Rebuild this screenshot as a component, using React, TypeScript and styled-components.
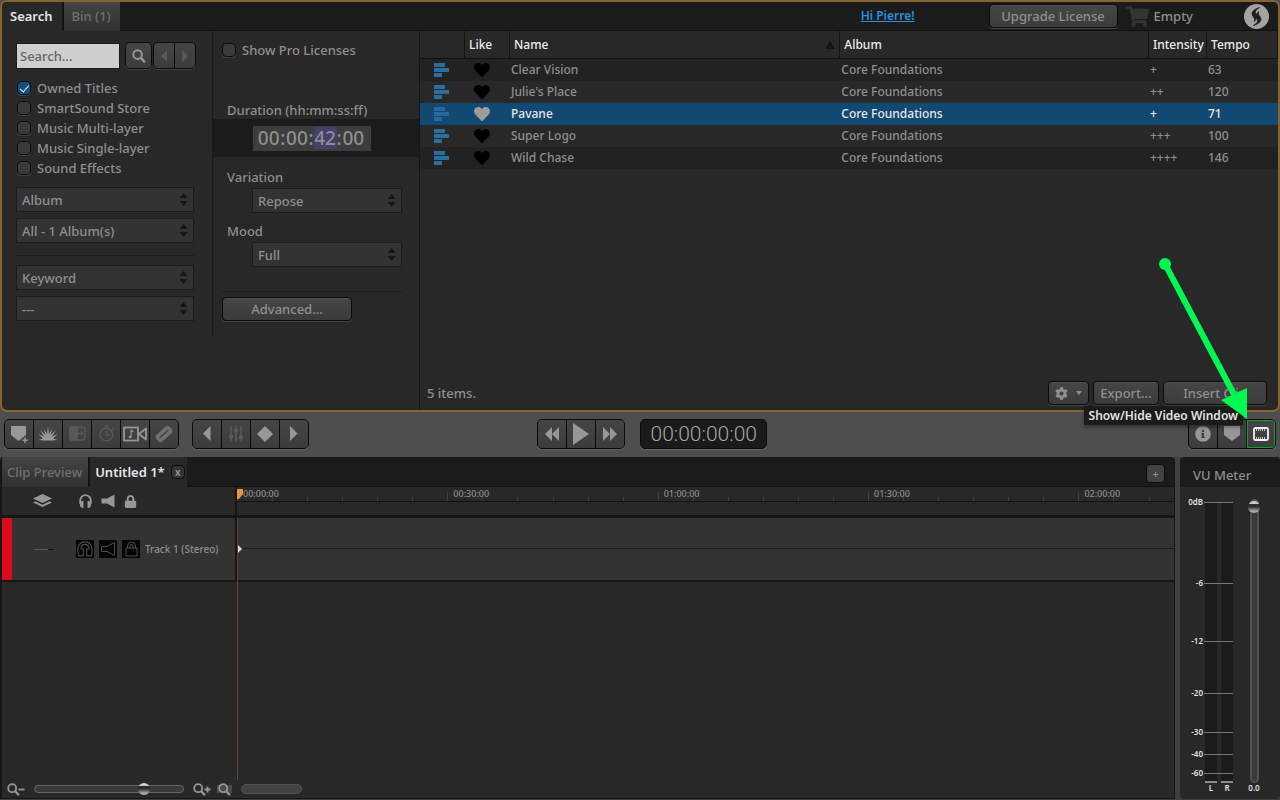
import React from "react";
import styled, { createGlobalStyle, css } from "styled-components";
import { FaCog, FaHeart, FaInfoCircle, FaLock, FaShoppingCart } from "react-icons/fa";

const GlobalStyle = createGlobalStyle`
  *, *::before, *::after { box-sizing: border-box; }
  body {
    margin: 0;
    background: #4e4e4e;
    color: #8f8f8f;
    font: 500 13px/20px "Noto Sans", sans-serif;
  }
  button, input, select { font: inherit; color: inherit; margin: 0; }
  svg { display: block; flex: none; }
`;

const Page = styled.div`
  display: flex;
  flex-direction: column;
  min-height: 100vh;
`;

/* ---------- browser panel ---------- */

const BrowserPanel = styled.section`
  display: flex;
  flex-direction: column;
  min-height: 412px;
  border: 2px solid #86642f;
  border-radius: 7px;
  background: #282828;
  overflow: hidden;
`;

const TopBar = styled.header`
  display: flex;
  align-items: center;
  height: 29px;
  background: #1b1b1b;
  border-bottom: 1px solid #101010;
`;

const Tab = styled.button<{ $active?: boolean; $divided?: boolean }>`
  display: flex;
  align-items: center;
  gap: 6px;
  height: 100%;
  padding: 0 8px;
  border: 0;
  border-right: ${(p) => (p.$divided ? "2px solid #141414" : "0")};
  background: ${(p) => (p.$active ? "#282828" : "linear-gradient(#444, #303030)")};
  color: ${(p) => (p.$active ? "#e4e4e4" : "#707070")};
  font-weight: ${(p) => (p.$active ? 600 : 500)};
  white-space: nowrap;
`;

const BrowserTab = styled(Tab)`
  height: 29px;
  padding: 0 9px 0 8px;
`;

const Account = styled.div`
  display: flex;
  align-items: center;
  margin-left: auto;
  padding-right: 9px;
`;

const AccountLink = styled.a`
  margin-right: 74px;
  color: #2f8fd6;
  font-size: 12px;
  font-weight: 600;
`;

const Cart = styled.div`
  display: flex;
  align-items: center;
  gap: 5px;
  margin: 0 51px 0 8px;
  svg { color: #343434; }
`;

const Button = styled.button<{ $width: number }>`
  display: flex;
  align-items: center;
  justify-content: center;
  gap: 8px;
  width: ${(p) => p.$width}px;
  height: 24px;
  padding: 0;
  border: 1px solid #0a0a0a;
  border-radius: 4px;
  background: linear-gradient(#464646, #3b3b3b);
  box-shadow: inset 0 1px #505050, 0 1px #454545;
  color: #8f8f8f;
`;

const BrowserBody = styled.div`
  display: flex;
  flex: 1;
`;

const FilterColumn = styled.aside`
  align-self: flex-start;
  width: 211px;
  height: 305px;
  padding: 11px 18px 0 14px;
  border-right: 1px solid #1a1a1a;
`;

const SearchRow = styled.form`
  display: flex;
  align-items: center;
  margin-bottom: 9px;
`;

const SearchInput = styled.input`
  width: 104px;
  height: 26px;
  padding: 0 3px;
  border: 1px solid #1a1a1a;
  border-radius: 0;
  background: #cecece;
  color: #333;
  outline: 0;
  &::placeholder { color: #666; opacity: 1; }
`;

const IconGroup = styled.div`
  display: flex;
  flex: none;
  border: 1px solid #0a0a0a;
  border-radius: 5px;
  background: #0a0a0a;
  box-shadow: 0 1px #626262;
  gap: 1px;
  overflow: hidden;
`;

const SearchGroup = styled(IconGroup)`
  margin-left: 5px;
  box-shadow: 0 1px #444;
  & + & { margin-left: 1px; }
`;

const IconButton = styled.button<{ $dim?: boolean; $small?: boolean; $marked?: boolean }>`
  display: flex;
  align-items: center;
  justify-content: center;
  width: ${(p) => (p.$small ? 20 : 28)}px;
  height: ${(p) => (p.$small ? 25 : 28)}px;
  padding: 0;
  border: 0;
  background: linear-gradient(#454545, #3c3c3c);
  color: ${(p) => (p.$marked ? "#f0f0f0" : p.$dim ? "#585858" : "#979797")};
  ${(p) => p.$marked && css`outline: 1px solid #00a832; outline-offset: -1px;`}
`;

const SearchButton = styled(IconButton)`
  width: 25px;
`;

const CheckLabel = styled.label`
  display: flex;
  align-items: center;
  gap: 6px;
  height: 20px;
`;

const SourceLabel = styled(CheckLabel)`
  padding-left: 1px;
`;

const CheckBox = styled.input.attrs({ type: "checkbox" })`
  appearance: none;
  display: grid;
  place-items: center;
  width: 14px;
  height: 14px;
  border: 1px solid #0c0c0c;
  border-radius: 4px;
  background: #3a3a3a;
  box-shadow: 0 1px #424242;
  &:checked { background: #12507e; }
  &:checked::after {
    content: "";
    width: 9px;
    height: 5px;
    border: solid #e8e8e8;
    border-width: 0 0 1px 1px;
    transform: translateY(-1px) rotate(-48deg);
  }
`;

const SelectStack = styled.div`
  display: flex;
  flex-direction: column;
  gap: 6px;
  padding-top: 9px;
`;

const SelectBox = styled.div`
  display: grid;
  align-items: center;
  & > * { grid-area: 1 / 1; }
  & > svg { justify-self: end; margin-right: 6px; pointer-events: none; }
`;

const SelectField = styled.select`
  appearance: none;
  width: 100%;
  height: 25px;
  padding: 0 20px 0 5px;
  border: 1px solid #1b1b1b;
  border-radius: 0;
  background: #333;
`;

const Rule = styled.hr`
  width: 100%;
  margin: 6px 0 3px;
  border: 0;
  border-top: 1px solid #1b1b1b;
`;

const SettingsColumn = styled.div`
  width: 207px;
  padding-top: 9px;
  border-right: 1px solid #161616;
`;

const SettingsInset = styled.div`
  padding: 0 17px 0 9px;
`;

const FieldTitle = styled.div`
  padding-left: 14px;
  line-height: 18px;
`;

const ProLabel = styled(CheckLabel)`
  margin: 0 9px 41px;
`;

const TimeBand = styled.div`
  display: flex;
  align-items: center;
  justify-content: center;
  height: 38px;
  margin-bottom: 11px;
  padding-right: 8px;
  background: #1b1b1b;
`;

const TimeField = styled.div`
  display: flex;
  align-items: center;
  height: 25px;
  padding: 0 6px 0 4px;
  background: #3d3d3d;
  font-size: 19px;
`;

const TimePart = styled.input<{ $active?: boolean }>`
  width: 23px;
  height: 22px;
  padding: 0;
  border: 0;
  outline: 0;
  text-align: center;
  background: ${(p) => (p.$active ? "#41416a" : "transparent")};
`;

const Setting = styled.label`
  display: block;
  margin-bottom: 9px;
`;

const SettingSelect = styled.div`
  padding: 2px 17px 0 39px;
`;

const SettingsRule = styled(Rule)`
  margin: 24px 0 5px;
`;

const Results = styled.div`
  display: flex;
  flex: 1;
  flex-direction: column;
  min-width: 0;
`;

const ResultTable = styled.table`
  width: 100%;
  table-layout: fixed;
  border-collapse: separate;
  border-spacing: 0;
`;

const HeadCell = styled.th<{ $width?: string }>`
  width: ${(p) => p.$width ?? "auto"};
  height: 28px;
  padding: 0 4px;
  border-right: 1px solid #151515;
  border-bottom: 1px solid #101010;
  color: #ececec;
  font-size: 12px;
  font-weight: 500;
  text-align: left;
  white-space: nowrap;
`;

const SortHead = styled.div`
  display: flex;
  align-items: center;
  justify-content: space-between;
`;

const Row = styled.tr<{ $selected?: boolean }>`
  height: 22px;
  background: #282828;
  &:nth-child(odd) { background: #222; }
  ${(p) => p.$selected && css`&&:nth-child(n) { background: #114972; color: #e6e6e6; }`}
`;

const Cell = styled.td`
  height: 22px;
  padding: 0 1px;
  font-size: 12px;
`;

const IconCell = styled(Cell)<{ $trim: number }>`
  padding: 0 ${(p) => p.$trim}px 0 0;
  svg { margin: 0 auto; }
`;

const ResultFooter = styled.footer`
  display: flex;
  align-items: center;
  gap: 4px;
  margin-top: auto;
  padding: 0 11px 5px 7px;
`;

const ItemCount = styled.span`
  margin-right: auto;
`;

/* ---------- transport bar ---------- */

const Transport = styled.div`
  display: grid;
  grid-template-columns: calc(42% - 1px) auto 1fr;
  align-items: center;
  height: 45px;
  padding: 0 4px 2px;
`;

const ToolSet = styled.div<{ $gap: number }>`
  display: flex;
  gap: ${(p) => p.$gap}px;
`;

const TimeDisplay = styled.output`
  width: 127px;
  height: 30px;
  border: 1px solid #0a0a0a;
  border-radius: 5px;
  background: #1a1a1a;
  box-shadow: 0 1px #6a6a6a;
  color: #a6a6a6;
  font: 300 21px/28px Roboto, sans-serif;
  text-align: center;
`;

const ViewTools = styled.div`
  position: relative;
  justify-self: end;
`;

const Tooltip = styled.div`
  position: absolute;
  right: 33px;
  top: -13px;
  padding: 0 5px;
  background: #1b1b1b;
  box-shadow: 0 2px 4px rgba(0, 0, 0, 0.4);
  color: #e2e2e2;
  font-size: 12px;
  font-weight: 600;
  line-height: 19px;
  white-space: nowrap;
`;

const Pointer = styled.svg`
  position: absolute;
  right: 26px;
  bottom: 28px;
  pointer-events: none;
`;

/* ---------- timeline ---------- */

const Workspace = styled.main`
  display: flex;
  flex: 1;
  gap: 5px;
  padding-bottom: 1px;
  background: #404040;
`;

const TimelinePanel = styled.section`
  display: flex;
  flex: 1;
  flex-direction: column;
  min-width: 0;
  border: solid #161616;
  border-width: 0 1px 1px 2px;
  border-radius: 4px 4px 0 0;
  background: #282828;
  overflow: hidden;
`;

const TimelineTabs = styled.div`
  display: flex;
  align-items: center;
  height: 30px;
  padding-right: 9px;
  background: #1b1b1b;
  border-bottom: 1px solid #101010;
`;

const TimelineTab = styled(Tab)`
  height: 30px;
  padding: 0 ${(p) => (p.$divided ? 6 : 2)}px 0 5px;
`;

const CloseButton = styled.button`
  display: flex;
  align-items: center;
  justify-content: center;
  width: 14px;
  height: 14px;
  padding: 0;
  border: 1px solid #0c0c0c;
  border-radius: 4px;
  background: #333;
  color: #999;
  font-size: 10px;
  line-height: 10px;
`;

const AddButton = styled(CloseButton)`
  width: 19px;
  height: 19px;
  margin: 4px 0 0 auto;
  background: #424242;
`;

const TimelineHead = styled.div`
  display: grid;
  grid-template-columns: 235px 1fr;
  height: 31px;
  border-bottom: 3px solid #161616;
`;

const HeadTools = styled.div`
  display: flex;
  align-items: center;
  padding-left: 31px;
  gap: 9px;
  border-right: 2px solid #161616;
  color: #979797;
  & > :first-child { margin-right: 18px; }
`;

const Ruler = styled.div`
  display: flex;
  height: 15px;
  border-bottom: 1px solid #131313;
  overflow: hidden;
`;

const RulerSegment = styled.div`
  display: grid;
  flex: 0 0 22.45%;
  & > * { grid-area: 1 / 1; }
`;

const RulerLabel = styled.span`
  padding-left: 6px;
  color: #8f8f8f;
  font-size: 9px;
  line-height: 14px;
`;

const Ticks = styled.div`
  display: flex;
  align-items: flex-end;
`;

const Tick = styled.i<{ $major?: boolean }>`
  flex: 1;
  height: ${(p) => (p.$major ? 9 : 4)}px;
  border-left: 1px solid #404040;
`;

const TimelineBody = styled.div`
  position: relative;
  flex: 1;
  min-height: 262px;
`;

const Track = styled.div`
  display: grid;
  grid-template-columns: 235px 1fr;
  height: 64px;
  border-bottom: 2px solid #161616;
  background: #333;
`;

const TrackHead = styled.div`
  display: flex;
  align-items: center;
  gap: 5px;
  border-left: 10px solid #dd0a1c;
  border-right: 2px solid #161616;
  font-size: 10px;
`;

const TrackLevel = styled.span`
  width: 20px;
  height: 1px;
  margin: 0 17px 0 22px;
  background: linear-gradient(90deg, #585858 70%, #161616 70%);
`;

const TrackToggle = styled.button`
  display: flex;
  align-items: center;
  justify-content: center;
  width: 18px;
  height: 18px;
  padding: 0;
  border: 0;
  background: #050505;
  color: #4c4c4c;
`;

const TrackName = styled.span`
  white-space: nowrap;
`;

const TrackLane = styled.div`
  display: flex;
  align-items: center;
  &::after {
    content: "";
    flex: 1;
    height: 2px;
    border-top: 1px solid #1d1d1d;
    background: #2c3840;
  }
`;

const Playhead = styled.div`
  position: absolute;
  left: 235px;
  top: 0;
  bottom: 0;
  width: 1px;
  background: #5d4731;
`;

const PlayheadFlag = styled.svg`
  position: absolute;
  left: 0;
  top: -29px;
`;

const TimelineFooter = styled.div`
  display: flex;
  align-items: center;
  height: 18px;
  padding-left: 5px;
  color: #979797;
`;

const thumb = css`
  appearance: none;
  width: 12px;
  height: 12px;
  border: 0;
  border-radius: 6px;
  background: linear-gradient(#d4d4d4 20%, #222 30%, #333 50%, #aaa 85%);
`;

const ZoomSlider = styled.input.attrs({ type: "range" })`
  appearance: none;
  width: 150px;
  height: 8px;
  margin: 0 9px;
  border: 1px solid #666;
  border-radius: 4px;
  background: #3a3a3a;
  &::-webkit-slider-thumb { ${thumb} }
`;

const ScrollThumb = styled.div`
  width: 61px;
  height: 10px;
  margin-left: 9px;
  border: 1px solid #545454;
  border-radius: 5px;
  background: #424242;
`;

const ZoomFit = styled.span`
  display: flex;
  justify-content: center;
  width: 15px;
  height: 8px;
  margin-left: 6px;
  align-items: center;
  background: #4a4a4a;
`;

/* ---------- VU meter ---------- */

const MeterPanel = styled.aside`
  display: flex;
  flex-direction: column;
  width: 100px;
  border-radius: 4px;
  background: #282828;
  overflow: hidden;
`;

const MeterTitle = styled.h2`
  margin: 0;
  padding: 3px 0 0 13px;
  height: 30px;
  background: #1b1b1b;
  font-size: 13px;
  font-weight: 500;
  line-height: 30px;
`;

const MeterBody = styled.div`
  display: flex;
  flex: 1;
  padding: 15px 0 0 4px;
`;

const MeterColumn = styled.div`
  display: flex;
  flex-direction: column;
  width: 49px;
`;

const MeterGraph = styled.div`
  display: grid;
  flex: 1;
  & > * { grid-area: 1 / 1; }
`;

const Bars = styled.div`
  display: grid;
  grid-template-columns: 12px 12px;
  gap: 4px;
  justify-content: end;
`;

const Bar = styled.div`
  border-bottom: 2px solid #8c8c8c;
  background: #1b1b1b;
`;

const Scale = styled.div`
  display: grid;
  grid-template-rows: 81fr 58fr 52fr 39fr 22fr 19fr 10fr;
`;

const Mark = styled.div`
  display: flex;
  align-items: center;
  height: 10px;
  margin-top: -5px;
  &::after {
    content: "";
    width: 29px;
    height: 1px;
    background: #767676;
  }
`;

const MeterText = styled.span`
  flex: 1;
  padding-right: 1px;
  color: #e0e0e0;
  font-size: 8px;
  font-weight: 600;
  line-height: 10px;
  text-align: right;
`;

const MeterFoot = styled.div`
  display: grid;
  grid-template-columns: 12px 12px;
  gap: 4px;
  justify-content: end;
  height: 16px;
`;

const FootText = styled(MeterText)`
  padding: 0;
  text-align: center;
`;

const FaderColumn = styled.div`
  display: flex;
  flex-direction: column;
  align-items: center;
  width: 24px;
  margin: -3px 0 0 9px;
`;

const Fader = styled.input.attrs({ type: "range" })`
  appearance: none;
  writing-mode: vertical-lr;
  direction: rtl;
  flex: 1;
  width: 9px;
  min-height: 0;
  border: 2px solid #505050;
  border-radius: 5px;
  background: #3a3a3a;
  &::-webkit-slider-thumb { ${thumb} }
`;

const FaderFoot = styled.div`
  display: flex;
  height: 16px;
`;

/* ---------- drawings ---------- */

const Arrow = ({ left, size = 12 }: { left?: boolean; size?: number }) => (
  <svg width={size / 2} height={size} viewBox="0 0 6 12" fill="currentColor">
    <path d={left ? "M6 0v12L0 6z" : "M0 0v12l6-6z"} />
  </svg>
);

const UpDown = () => (
  <svg width="9" height="13" viewBox="0 0 9 13" fill="#151515">
    <path d="M4.5 0 8.5 5h-8zM.5 8h8l-4 5z" />
  </svg>
);

const Magnifier = ({ sign, size = 13 }: { sign?: string; size?: number }) => (
  <svg width={sign ? 18 : size} height={size} viewBox={sign ? "0 0 18 13" : "0 0 13 13"} fill="none" stroke="currentColor" strokeWidth="1.8">
    <circle cx="5.2" cy="5.2" r="4" />
    <path d="m8.2 8.2 3.8 4" strokeWidth="2.2" />
    {sign && <path d={sign === "+" ? "M11.5 6.5h6M14.5 3.5v6" : "M11.5 6.5h6"} />}
  </svg>
);

const Lanes = ({ faded }: { faded?: boolean }) => (
  <svg width="15" height="14" viewBox="0 0 15 14" fill={faded ? "#2c6fa3" : "#2a6f9f"}>
    <path d="M0 0h11v4H0zM0 5h15v4H0zM0 10h8v4H0z" opacity={faded ? 0.85 : 1} />
  </svg>
);

const crescent = "M15.500 3.500C9 5.500 6.500 9 9 12.300c1.300 1.600 2 2.700 1.300 5.200 2.700-2.700 3.200-4.800 1.700-7.500-1.200-2.200-.5-4 3.500-6.500z";

const Brand = () => (
  <svg width="25" height="25" viewBox="0 0 25 25">
    <circle cx="12.500" cy="12.500" r="12.500" fill="#a3a3a3" />
    <g fill="#1f1f1f" stroke="#1f1f1f" strokeWidth="0.8">
      <path d={crescent} />
      <path d={crescent} transform="rotate(180 12.500 12.500)" />
    </g>
  </svg>
);

const MarkerAdd = () => (
  <svg width="19" height="18" viewBox="0 0 19 18" fill="currentColor">
    <path d="M1 1h15v9l-7.500 6L1 10z" />
    <path d="M14.300 12.500h1.400v2h2v1.400h-2v2h-1.400v-2h-2v-1.400h2z" />
  </svg>
);

const Marker = () => (
  <svg width="16" height="15" viewBox="0 0 16 15" fill="currentColor">
    <path d="M0 0h16v9l-8 6-8-6z" />
  </svg>
);

const Burst = () => (
  <svg width="20" height="15" viewBox="0 0 20 15" fill="currentColor">
    <path d="m10 0 1 8 3.500-6-2 7L18 4l-4 6.500 6-2.500-5 4.500 5 1.500-6 .500H6L0 14l5-1.500L0 8l6 2.500L2 4l5.500 5-2-7L9 8z" />
  </svg>
);

const SplitBox = () => (
  <svg width="17" height="15" viewBox="0 0 17 15">
    <path d="M9 1h4.500A2.500 2.500 0 0 1 16 3.500v8a2.500 2.500 0 0 1-2.500 2.500H9M9 7.500h7M12.500 5v5" fill="none" stroke="currentColor" strokeWidth="1.400" />
    <path d="M4 0h5v15H4a3 3 0 0 1-4-3V3a3 3 0 0 1 4-3z" fill="currentColor" />
  </svg>
);

const Stopwatch = () => (
  <svg width="17" height="17" viewBox="0 0 17 17" fill="none" stroke="currentColor" strokeWidth="1.600">
    <circle cx="8.500" cy="9.500" r="6.300" />
    <path d="M8.500 6v4h3.500M6.500 1h4M8.500 1v2M14 3l1.500 1.500" />
  </svg>
);

const MusicVideo = () => (
  <svg width="25" height="16" viewBox="0 0 25 16" fill="none" stroke="currentColor" strokeWidth="1.800">
    <rect x="1" y="1.500" width="14" height="13" />
    <path d="M16 8l7-5.500v11z" strokeLinejoin="round" />
    <path d="M8 4v7M8 4l2.500 2" strokeWidth="1.200" />
    <circle cx="7" cy="11" r="1.300" fill="currentColor" stroke="none" />
  </svg>
);

const Clip = () => (
  <svg width="18" height="18" viewBox="0 0 18 18">
    <g transform="rotate(-42 9 9)">
      <rect x="0" y="4.500" width="18" height="9" rx="3" fill="#707070" />
      <path d="M3 9h12" stroke="#404040" strokeWidth="1.500" />
    </g>
  </svg>
);

const Mixer = () => (
  <svg width="14" height="16" viewBox="0 0 14 16" fill="none" stroke="currentColor" strokeWidth="1.600">
    <path d="M2 0v16M7 0v16M12 0v16" />
    <path d="M0 10.500h4M5 4.500h4M10 11.500h4" strokeWidth="3" />
  </svg>
);

const Diamond = () => (
  <svg width="16" height="16" viewBox="0 0 16 16" fill="currentColor">
    <path d="m8 0 8 8-8 8-8-8z" />
  </svg>
);

const Skip = ({ back }: { back?: boolean }) => (
  <svg width="14" height="14" viewBox="0 0 14 14" fill="currentColor">
    <path d={back ? "M7 0v14L0 7zM14 0v14L7 7z" : "M0 0v14l7-7zM7 0v14l7-7z"} />
  </svg>
);

const Play = () => (
  <svg width="16" height="22" viewBox="0 0 16 22" fill="currentColor">
    <path d="M0 0v22l16-11z" />
  </svg>
);

const Film = () => (
  <svg width="16" height="14" viewBox="0 0 16 14" fill="none" stroke="currentColor">
    <rect x="1" y="1" width="14" height="12" rx="1.500" strokeWidth="1.800" />
    <path d="M3 3h10M3 11h10" strokeDasharray="1 1" strokeWidth="1.600" />
  </svg>
);

const Layers = () => (
  <svg width="19" height="14" viewBox="0 0 19 14" fill="currentColor">
    <path d="m9.500 0 9.500 4.500L9.500 9 0 4.500z" />
    <path d="m0 8.500 2.500-1.200 7 3.400 7-3.400L19 8.500 9.500 13z" />
  </svg>
);

const Headphones = ({ outline }: { outline?: boolean }) => (
  <svg width={outline ? 16 : 13} height={outline ? 16 : 14} viewBox="0 0 13 14" fill="none" stroke="currentColor">
    {outline ? (
      <path d="M1 13C-1 6 1 .8 6.500.8S14 6 12 13H8V7h2C10 4 9 3 6.500 3S3 4 3 7h2v6z" />
    ) : (
      <>
        <path d="M1.200 10V6.500a5.300 5.300 0 0 1 10.600 0V10" strokeWidth="1.800" />
        <path d="M1 7h3.500v7H3L1 12zM12 7H8.500v7H10l2-2z" fill="currentColor" stroke="none" />
      </>
    )}
  </svg>
);

const Speaker = ({ outline }: { outline?: boolean }) => (
  <svg width="14" height="14" viewBox="0 0 14 14" fill={outline ? "none" : "currentColor"} stroke={outline ? "currentColor" : "none"}>
    <path d="M.5 4.500H6L13.500.5v13L6 9.500H.5z" />
  </svg>
);

const PadlockOutline = () => (
  <svg width="13" height="16" viewBox="0 0 13 16" fill="none" stroke="currentColor">
    <path d="M1 7h11v8H1zM2.500 7V5a4 4 0 0 1 8 0v2M5 7V5a1.500 1.500 0 0 1 3 0v2" />
  </svg>
);

/* ---------- data ---------- */

const sources = ["Owned Titles", "SmartSound Store", "Music Multi-layer", "Music Single-layer", "Sound Effects"];

const titles = [
  { name: "Clear Vision", intensity: "+", tempo: 63 },
  { name: "Julie's Place", intensity: "++", tempo: 120 },
  { name: "Pavane", intensity: "+", tempo: 71, selected: true },
  { name: "Super Logo", intensity: "+++", tempo: 100 },
  { name: "Wild Chase", intensity: "++++", tempo: 146 },
];

const rulerTimes = ["00:00:00", "00:30:00", "01:00:00", "01:30:00", "02:00:00"];
const levels = ["0dB", "-6", "-12", "-20", "-30", "-40", "-60"];

const Select = ({ value, label }: { value: string; label: string }) => (
  <SelectBox>
    <SelectField aria-label={label} defaultValue={value}>
      <option>{value}</option>
    </SelectField>
    <UpDown />
  </SelectBox>
);

export default function App() {
  return (
    <Page>
      <GlobalStyle />
      <BrowserPanel>
        <TopBar>
          <BrowserTab $active $divided>Search</BrowserTab>
          <BrowserTab>Bin (1)</BrowserTab>
          <Account>
            <AccountLink href="#account">Hi Pierre!</AccountLink>
            <Button $width={129}>Upgrade License</Button>
            <Cart>
              <FaShoppingCart size={23} />
              Empty
            </Cart>
            <Brand />
          </Account>
        </TopBar>
        <BrowserBody>
          <FilterColumn>
            <SearchRow onSubmit={(e) => e.preventDefault()}>
              <SearchInput placeholder="Search..." aria-label="Search" />
              <SearchGroup>
                <SearchButton $small aria-label="Run search"><Magnifier size={14} /></SearchButton>
              </SearchGroup>
              <SearchGroup>
                <IconButton type="button" $small $dim aria-label="Back"><Arrow left /></IconButton>
                <IconButton type="button" $small $dim aria-label="Forward"><Arrow /></IconButton>
              </SearchGroup>
            </SearchRow>
            {sources.map((source, i) => (
              <SourceLabel key={source}>
                <CheckBox defaultChecked={i === 0} />
                {source}
              </SourceLabel>
            ))}
            <SelectStack>
              <Select label="Group by" value="Album" />
              <Select label="Album" value="All - 1 Album(s)" />
              <Rule />
              <Select label="Filter by" value="Keyword" />
              <Select label="Keyword" value="---" />
            </SelectStack>
          </FilterColumn>
          <SettingsColumn>
            <ProLabel><CheckBox />Show Pro Licenses</ProLabel>
            <FieldTitle>Duration (hh:mm:ss:ff)</FieldTitle>
            <TimeBand>
              <TimeField>
                <TimePart aria-label="Hours" defaultValue="00" />:
                <TimePart aria-label="Minutes" defaultValue="00" />:
                <TimePart aria-label="Seconds" defaultValue="42" $active />:
                <TimePart aria-label="Frames" defaultValue="00" />
              </TimeField>
            </TimeBand>
            <Setting>
              <FieldTitle>Variation</FieldTitle>
              <SettingSelect><Select label="Variation" value="Repose" /></SettingSelect>
            </Setting>
            <Setting>
              <FieldTitle>Mood</FieldTitle>
              <SettingSelect><Select label="Mood" value="Full" /></SettingSelect>
            </Setting>
            <SettingsInset>
              <SettingsRule />
              <Button $width={130}>Advanced...</Button>
            </SettingsInset>
          </SettingsColumn>
          <Results>
            <ResultTable>
              <thead>
                <tr>
                  <HeadCell $width="45px" aria-label="Type" />
                  <HeadCell $width="45px">Like</HeadCell>
                  <HeadCell $width="38.5%">
                    <SortHead>
                      Name
                      <svg width="10" height="8" viewBox="0 0 10 8"><path d="M5 0l5 8H0z" fill="#141414" /></svg>
                    </SortHead>
                  </HeadCell>
                  <HeadCell>Album</HeadCell>
                  <HeadCell $width="58px">Intensity</HeadCell>
                  <HeadCell $width="71px">Tempo</HeadCell>
                </tr>
              </thead>
              <tbody>
                {titles.map((t) => (
                  <Row key={t.name} $selected={t.selected}>
                    <IconCell $trim={2}><Lanes faded={t.selected} /></IconCell>
                    <IconCell $trim={11}><FaHeart size={16} color={t.selected ? "#9c9c9c" : "#000"} /></IconCell>
                    <Cell>{t.name}</Cell>
                    <Cell>Core Foundations</Cell>
                    <Cell>{t.intensity}</Cell>
                    <Cell>{t.tempo}</Cell>
                  </Row>
                ))}
              </tbody>
            </ResultTable>
            <ResultFooter>
              <ItemCount>5 items.</ItemCount>
              <Button $width={41} aria-label="Options">
                <FaCog size={13} />
                <svg width="6" height="4" viewBox="0 0 6 4" fill="currentColor"><path d="M0 0h6L3 4z" /></svg>
              </Button>
              <Button $width={66}>Export...</Button>
              <Button $width={104}>Insert Clip</Button>
            </ResultFooter>
          </Results>
        </BrowserBody>
      </BrowserPanel>

      <Transport>
        <ToolSet $gap={13}>
          <IconGroup>
            <IconButton aria-label="Add marker"><MarkerAdd /></IconButton>
            <IconButton aria-label="Hit"><Burst /></IconButton>
            <IconButton $dim aria-label="Split"><SplitBox /></IconButton>
            <IconButton $dim aria-label="Timing"><Stopwatch /></IconButton>
            <IconButton aria-label="Music to video"><MusicVideo /></IconButton>
            <IconButton $dim aria-label="Blade"><Clip /></IconButton>
          </IconGroup>
          <IconGroup>
            <IconButton aria-label="Previous keyframe"><Arrow left size={15} /></IconButton>
            <IconButton $dim aria-label="Mixer"><Mixer /></IconButton>
            <IconButton aria-label="Keyframe"><Diamond /></IconButton>
            <IconButton aria-label="Next keyframe"><Arrow size={15} /></IconButton>
          </IconGroup>
        </ToolSet>
        <ToolSet $gap={15}>
          <IconGroup>
            <IconButton aria-label="Rewind"><Skip back /></IconButton>
            <IconButton aria-label="Play"><Play /></IconButton>
            <IconButton aria-label="Fast forward"><Skip /></IconButton>
          </IconGroup>
          <TimeDisplay>00:00:00:00</TimeDisplay>
        </ToolSet>
        <ViewTools>
          <IconGroup>
            <IconButton aria-label="Info"><FaInfoCircle size={16} /></IconButton>
            <IconButton aria-label="Markers"><Marker /></IconButton>
            <IconButton $marked aria-label="Show/Hide Video Window"><Film /></IconButton>
          </IconGroup>
          <Tooltip role="tooltip">Show/Hide Video Window</Tooltip>
          <Pointer width="95" height="165" viewBox="0 0 95 165" fill="#00f950">
            <circle cx="10" cy="8" r="6" />
            <path d="M10 8 82 144" stroke="#00f950" strokeWidth="6" />
            <path d="M92 163 66 144 92 132z" />
          </Pointer>
        </ViewTools>
      </Transport>

      <Workspace>
        <TimelinePanel>
          <TimelineTabs>
            <TimelineTab $divided>Clip Preview</TimelineTab>
            <TimelineTab as="div" $active>
              Untitled 1*
              <CloseButton aria-label="Close tab">x</CloseButton>
            </TimelineTab>
            <AddButton aria-label="Add track">+</AddButton>
          </TimelineTabs>
          <TimelineHead>
            <HeadTools>
              <Layers />
              <Headphones />
              <Speaker />
              <FaLock size={13} />
            </HeadTools>
            <Ruler>
              {rulerTimes.map((time) => (
                <RulerSegment key={time}>
                  <Ticks>
                    {[0, 1, 2, 3, 4, 5].map((n) => <Tick key={n} $major={n === 0} />)}
                  </Ticks>
                  <RulerLabel>{time}</RulerLabel>
                </RulerSegment>
              ))}
            </Ruler>
          </TimelineHead>
          <TimelineBody>
            <Track>
              <TrackHead>
                <TrackLevel />
                <TrackToggle aria-label="Solo"><Headphones outline /></TrackToggle>
                <TrackToggle aria-label="Mute"><Speaker outline /></TrackToggle>
                <TrackToggle aria-label="Lock"><PadlockOutline /></TrackToggle>
                <TrackName>Track 1 (Stereo)</TrackName>
              </TrackHead>
              <TrackLane>
                <svg width="5" height="10" viewBox="0 0 5 10"><path d="M0 0v10l5-5z" fill="#d8d8d8" /></svg>
              </TrackLane>
            </Track>
            <Playhead>
              <PlayheadFlag width="6" height="10" viewBox="0 0 6 10"><path d="M0 0h6v5l-4 5H0z" fill="#e8963c" /></PlayheadFlag>
            </Playhead>
          </TimelineBody>
          <TimelineFooter>
            <Magnifier sign="-" />
            <ZoomSlider aria-label="Zoom" defaultValue={76} />
            <Magnifier sign="+" />
            <ZoomFit><Magnifier /></ZoomFit>
            <ScrollThumb />
          </TimelineFooter>
        </TimelinePanel>
        <MeterPanel>
          <MeterTitle>VU Meter</MeterTitle>
          <MeterBody>
            <MeterColumn>
              <MeterGraph>
                <Bars><Bar /><Bar /></Bars>
                <Scale>
                  {levels.map((level) => (
                    <Mark key={level}><MeterText>{level}</MeterText></Mark>
                  ))}
                </Scale>
              </MeterGraph>
              <MeterFoot><FootText>L</FootText><FootText>R</FootText></MeterFoot>
            </MeterColumn>
            <FaderColumn>
              <Fader aria-label="Volume" defaultValue={100} />
              <FaderFoot><FootText>0.0</FootText></FaderFoot>
            </FaderColumn>
          </MeterBody>
        </MeterPanel>
      </Workspace>
    </Page>
  );
}
